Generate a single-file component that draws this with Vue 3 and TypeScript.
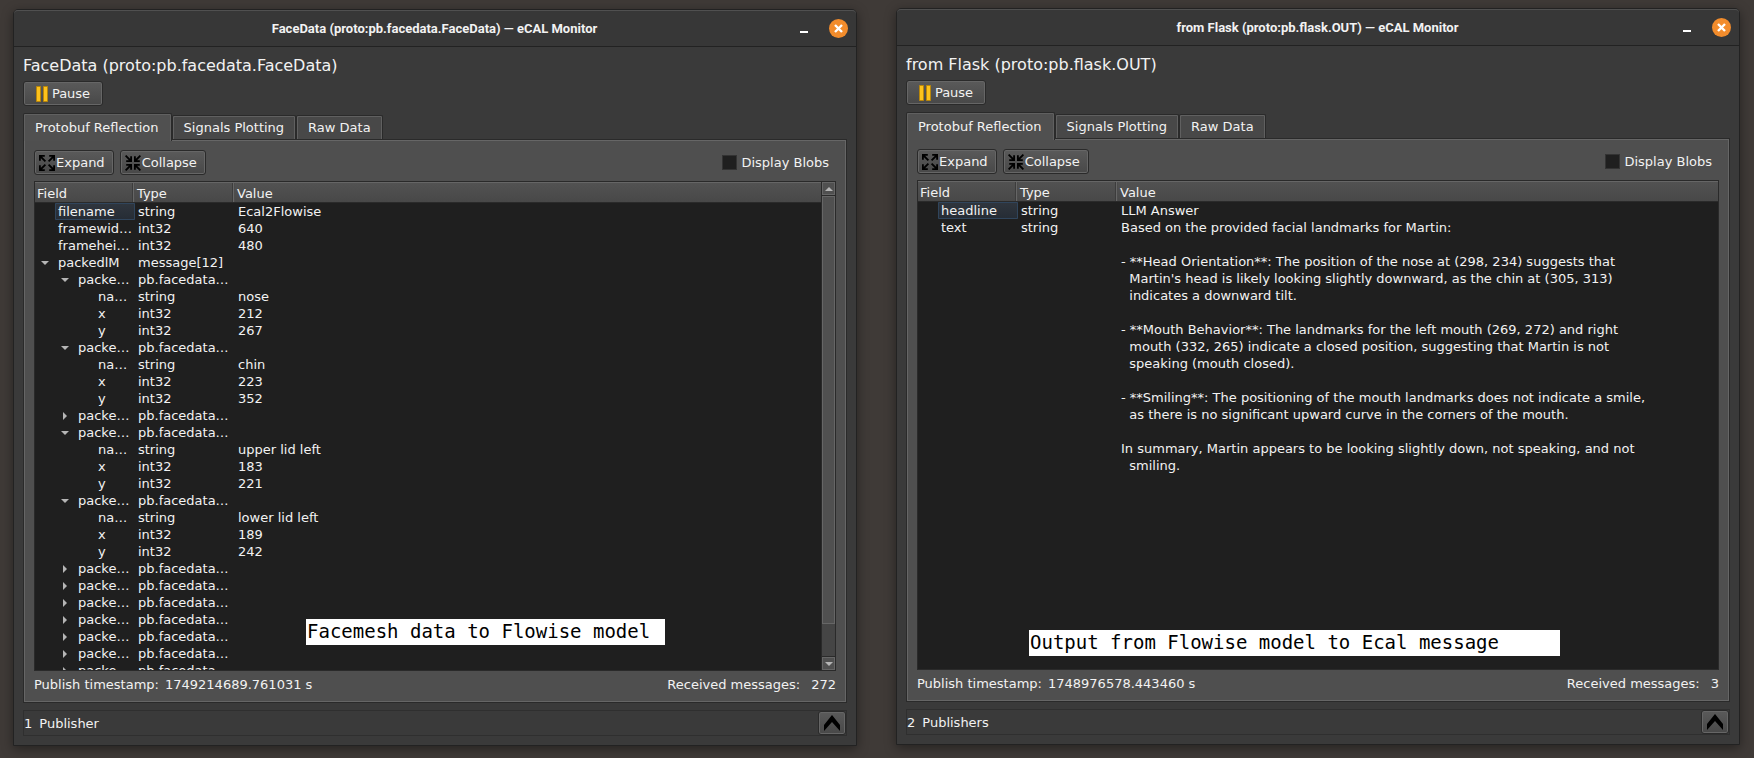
<script setup lang="ts">
import { reactive } from 'vue'

interface Row {
  level: number
  state?: 'open' | 'closed'
  field: string
  type: string
  value?: string
  current?: boolean
}

interface MonitorWindow {
  id: string
  topic: string
  rows: Row[]
  scrollable: boolean
  timestamp: string
  received: number
  publishers: number
  note: string
  tab: number
  blobs: boolean
}

const tabs = ['Protobuf Reflection', 'Signals Plotting', 'Raw Data']

const closed = (): Row => ({ level: 1, state: 'closed', field: 'packe…', type: 'pb.facedata…' })

const landmark = (name: string, x: number, y: number): Row[] => [
  { level: 1, state: 'open', field: 'packe…', type: 'pb.facedata…' },
  { level: 2, field: 'na…', type: 'string', value: name },
  { level: 2, field: 'x', type: 'int32', value: String(x) },
  { level: 2, field: 'y', type: 'int32', value: String(y) },
]

const answer = [
  'Based on the provided facial landmarks for Martin:',
  '',
  '- **Head Orientation**: The position of the nose at (298, 234) suggests that',
  "  Martin's head is likely looking slightly downward, as the chin at (305, 313)",
  '  indicates a downward tilt.',
  '',
  '- **Mouth Behavior**: The landmarks for the left mouth (269, 272) and right',
  '  mouth (332, 265) indicate a closed position, suggesting that Martin is not',
  '  speaking (mouth closed).',
  '',
  '- **Smiling**: The positioning of the mouth landmarks does not indicate a smile,',
  '  as there is no significant upward curve in the corners of the mouth.',
  '',
  'In summary, Martin appears to be looking slightly down, not speaking, and not',
  '  smiling.',
].join('\n')

const windows = reactive<MonitorWindow[]>([
  {
    id: 'face',
    topic: 'FaceData (proto:pb.facedata.FaceData)',
    rows: [
      { level: 0, field: 'filename', type: 'string', value: 'Ecal2Flowise', current: true },
      { level: 0, field: 'framewid…', type: 'int32', value: '640' },
      { level: 0, field: 'framehei…', type: 'int32', value: '480' },
      { level: 0, state: 'open', field: 'packedlM', type: 'message[12]' },
      ...landmark('nose', 212, 267),
      ...landmark('chin', 223, 352),
      closed(),
      ...landmark('upper lid left', 183, 221),
      ...landmark('lower lid left', 189, 242),
      ...Array.from({ length: 7 }, closed),
    ],
    scrollable: true,
    timestamp: '1749214689.761031 s',
    received: 272,
    publishers: 1,
    note: 'Facemesh data to Flowise model',
    tab: 0,
    blobs: false,
  },
  {
    id: 'flask',
    topic: 'from Flask (proto:pb.flask.OUT)',
    rows: [
      { level: 0, field: 'headline', type: 'string', value: 'LLM Answer', current: true },
      { level: 0, field: 'text', type: 'string', value: answer },
    ],
    scrollable: false,
    timestamp: '1748976578.443460 s',
    received: 3,
    publishers: 2,
    note: 'Output from Flowise model to Ecal message',
    tab: 0,
    blobs: false,
  },
])
</script>

<template>
  <main class="desktop">
    <section v-for="w in windows" :key="w.id" class="window" :class="w.id">
      <header class="titlebar">
        <h1>{{ w.topic }} — eCAL Monitor</h1>
        <button class="minimize" type="button" aria-label="Minimize"></button>
        <button class="close" type="button" aria-label="Close">
          <svg width="9" height="9" viewBox="0 0 9 9"><path d="M1 1l7 7M8 1l-7 7" /></svg>
        </button>
      </header>

      <div class="content">
        <h2>{{ w.topic }}</h2>
        <button class="btn pause" type="button">
          <svg width="12" height="16" viewBox="0 0 12 16">
            <path d="M.5.5h4v15h-4zM7.5.5h4v15h-4z" />
          </svg>
          Pause
        </button>

        <div class="tabs" role="tablist">
          <button
            v-for="(t, i) in tabs"
            :key="t"
            class="tab"
            :class="{ active: w.tab === i }"
            type="button"
            role="tab"
            :aria-selected="w.tab === i"
            @click="w.tab = i"
          >
            {{ t }}
          </button>
        </div>

        <div class="pane" role="tabpanel">
          <div class="toolbar">
            <button class="btn tool" type="button">
              <svg width="16" height="16" viewBox="0 0 16 16">
                <g v-for="a in 4" :key="a" :transform="`rotate(${a * 90} 8 8)`">
                  <path d="M.9 5.8V.9h4.9M1 1l5.4 5.4" />
                </g>
              </svg>
              Expand
            </button>
            <button class="btn tool" type="button">
              <svg width="16" height="16" viewBox="0 0 16 16">
                <g v-for="a in 4" :key="a" :transform="`rotate(${a * 90} 8 8)`">
                  <path d="M6.1 1.2v4.9H1.2M6 6L.6.6" />
                </g>
              </svg>
              Collapse
            </button>
            <label class="blobs"><input v-model="w.blobs" type="checkbox" />Display Blobs</label>
          </div>

          <div class="tree">
            <div class="viewport">
              <table>
                <colgroup>
                  <col class="narrow" />
                  <col class="narrow" />
                  <col />
                </colgroup>
                <thead>
                  <tr><th>Field</th><th>Type</th><th>Value</th></tr>
                </thead>
                <tbody>
                  <tr v-for="(r, i) in w.rows" :key="i">
                    <td class="field">
                      <div class="node" :class="`level-${r.level}`">
                        <span class="branch">
                          <svg v-if="r.state === 'open'" width="8" height="4" viewBox="0 0 8 4"><path d="M0 0h8L4 4z" /></svg>
                          <svg v-if="r.state === 'closed'" width="4" height="8" viewBox="0 0 4 8"><path d="M0 0l4 4-4 4z" /></svg>
                        </span>
                        <span class="name" :class="{ current: r.current }">{{ r.field }}</span>
                      </div>
                    </td>
                    <td>{{ r.type }}</td>
                    <td>{{ r.value }}</td>
                  </tr>
                </tbody>
              </table>
            </div>
            <div v-if="w.scrollable" class="scrollbar">
              <button type="button" aria-label="Scroll up">
                <svg width="8" height="4" viewBox="0 0 8 4"><path d="M0 4h8L4 0z" /></svg>
              </button>
              <div class="track"><div class="thumb"></div></div>
              <button type="button" aria-label="Scroll down">
                <svg width="8" height="4" viewBox="0 0 8 4"><path d="M0 0h8L4 4z" /></svg>
              </button>
            </div>
            <p class="note">{{ w.note }}</p>
          </div>

          <div class="info">
            <span>Publish timestamp:</span>
            <span>{{ w.timestamp }}</span>
            <span class="received">Received messages:</span>
            <span class="count">{{ w.received }}</span>
          </div>
        </div>

        <footer class="publishers">
          <span>{{ w.publishers }}</span>
          <span>{{ w.publishers === 1 ? 'Publisher' : 'Publishers' }}</span>
          <button class="btn up" type="button" aria-label="Show publishers">
            <svg width="16" height="16" viewBox="0 0 16 16"><path d="M8 0l8 10v6L8 7l-8 9v-6z" /></svg>
          </button>
        </footer>
      </div>
    </section>
  </main>
</template>

<style>
body {
  margin: 0;
  background: #3f3a37;
}
</style>

<style scoped>
.desktop {
  box-sizing: border-box;
  height: 100vh;
  min-height: 520px;
  display: flex;
  gap: 39px;
  padding: 8px 14px 12px 13px;
  overflow: hidden;
  font: 13px/17px "DejaVu Sans", sans-serif;
  color: #f2f2f2;
}
.window {
  flex: 1 1 0;
  min-width: 0;
  box-sizing: border-box;
  display: flex;
  flex-direction: column;
  border: 1px solid #222;
  border-radius: 5px 5px 0 0;
  background: #3a3a3a;
  box-shadow: 0 3px 12px rgba(0, 0, 0, 0.4);
}
.window.face {
  margin-top: 1px;
}
.window.flask {
  margin-bottom: 1px;
}
.titlebar {
  flex: none;
  box-sizing: border-box;
  height: 37px;
  display: flex;
  align-items: center;
  padding: 0 8px 0 66px;
  border-top: 1px solid #505050;
  border-bottom: 1px solid #222;
  border-radius: 4px 4px 0 0;
  background: #373737;
}
h1 {
  flex: 1;
  margin: 0;
  min-width: 0;
  font: bold 13px/20px Roboto, sans-serif;
  text-align: center;
  white-space: nowrap;
}
button {
  padding: 0;
  border: 0;
  font: inherit;
  color: inherit;
}
.minimize {
  width: 30px;
  height: 20px;
  margin-right: 10px;
  background: linear-gradient(#fff, #fff) 11px 12px / 8px 2px no-repeat;
}
.close {
  width: 19px;
  height: 19px;
  display: grid;
  place-items: center;
  border-radius: 50%;
  background: #f28c2c;
}
.close path {
  stroke: #fff;
  stroke-width: 2.4;
  fill: none;
}
.content {
  flex: 1;
  min-height: 0;
  display: flex;
  flex-direction: column;
  padding: 9px;
}
h2 {
  margin: 0 0 6px;
  font-size: 16px;
  font-weight: normal;
  line-height: 19px;
}
.btn {
  box-sizing: border-box;
  height: 25px;
  display: flex;
  align-items: center;
  justify-content: center;
  border: 1px solid #2a2a2a;
  border-radius: 3px;
  background: linear-gradient(#5a5a5a, #484848);
  box-shadow: inset 0 0 0 1px #666;
}
.pause {
  align-self: flex-start;
  width: 80px;
  gap: 4px;
}
.pause path {
  fill: #fdc21c;
  stroke: #b8860b;
}
.tabs {
  flex: none;
  display: flex;
  align-items: flex-end;
  margin-top: 7px;
}
.tab {
  box-sizing: border-box;
  height: 24px;
  padding: 0 11px;
  border: solid #2a2a2a;
  border-width: 1px 1px 0;
  border-radius: 2px 2px 0 0;
  background: #484848;
  box-shadow: inset 1px 1px #606060, inset -1px 0 #606060;
}
.tab.active {
  height: 28px;
  margin-bottom: -2px;
  padding: 0 12px 1px 11px;
  background: #505050;
  z-index: 1;
}
.pane {
  flex: 1;
  min-height: 0;
  display: flex;
  flex-direction: column;
  padding: 10px 10px 9px;
  border: 1px solid #2a2a2a;
  background: #4f4f4f;
  box-shadow: inset 0 0 0 1px #666;
}
.toolbar {
  flex: none;
  display: flex;
  align-items: center;
  gap: 6px;
  margin-bottom: 6px;
}
.tool {
  gap: 1px;
  padding: 0 8px 0 4px;
}
.tool path {
  fill: none;
  stroke: #000;
  stroke-width: 1.8;
}
.blobs {
  display: flex;
  align-items: center;
  gap: 4px;
  margin: 0 7px 0 auto;
}
.blobs input {
  appearance: none;
  box-sizing: border-box;
  width: 15px;
  height: 15px;
  margin: 0;
  border: 1px solid #333;
  background: #1f1f1f;
}
.blobs input:checked {
  background: #7a9cc0;
}
.tree {
  position: relative;
  flex: 1;
  min-height: 0;
  display: flex;
  border: 1px solid #2a2a2a;
  background: #1f1f1f;
}
.viewport {
  flex: 1;
  min-width: 0;
  overflow: hidden;
}
table {
  width: 100%;
  table-layout: fixed;
  border-collapse: separate;
  border-spacing: 0;
}
.narrow {
  width: 100px;
}
th {
  box-sizing: border-box;
  height: 21px;
  padding: 1px 2px 0;
  font-weight: normal;
  text-align: left;
  border-top: 1px solid #666;
  border-bottom: 1px solid #2a2a2a;
  background: linear-gradient(#525252, #484848);
}
th:not(:last-child) {
  box-shadow: inset -1px 0 #4c4c4c, inset -2px 0 #666, inset -3px 0 #3c3c3c;
}
td {
  height: 17px;
  padding: 0 3px;
  vertical-align: top;
  white-space: pre;
}
td.field {
  padding: 0;
}
.node {
  display: flex;
}
.level-1 {
  padding-left: 20px;
}
.level-2 {
  padding-left: 40px;
}
.branch {
  flex: none;
  width: 20px;
  height: 17px;
  display: grid;
  place-items: center;
}
.branch path,
.scrollbar path {
  fill: #b5b5b5;
}
.name {
  box-sizing: border-box;
  flex: 1;
  min-width: 0;
  padding-left: 3px;
}
.current {
  border-radius: 1px;
  background: linear-gradient(#30363e, #252c35);
  box-shadow: inset 0 0 0 1px #30455c;
}
.scrollbar {
  flex: none;
  width: 13px;
  display: flex;
  flex-direction: column;
  border-left: 1px solid #2a2a2a;
  background: #454545;
}
.scrollbar button {
  height: 13px;
  display: grid;
  place-items: center;
  background: #505050;
  box-shadow: inset 0 0 0 1px #666;
}
.track {
  flex: 1;
  border: solid #2a2a2a;
  border-width: 1px 0;
}
.thumb {
  box-sizing: border-box;
  height: 93%;
  border: 1px solid #666;
  background: #505050;
}
.note {
  position: absolute;
  box-sizing: border-box;
  margin: 0;
  height: 26px;
  padding: 0 1px;
  font: 19px/24px "DejaVu Sans Mono", monospace;
  white-space: nowrap;
  color: #000;
  background: #fff;
}
.face .note {
  left: 271px;
  bottom: 25px;
  width: 359px;
}
.flask .note {
  left: 111px;
  bottom: 13px;
  width: 531px;
}
.info {
  flex: none;
  display: flex;
  gap: 6px;
  padding-top: 5px;
}
.received {
  margin-left: auto;
}
.count {
  padding-left: 5px;
}
.publishers {
  flex: none;
  display: flex;
  align-items: center;
  gap: 7px;
  height: 24px;
  margin-top: 7px;
  border: 1px solid #2f2f2f;
}
.up {
  width: 28px;
  height: 24px;
  margin-left: auto;
}
</style>
